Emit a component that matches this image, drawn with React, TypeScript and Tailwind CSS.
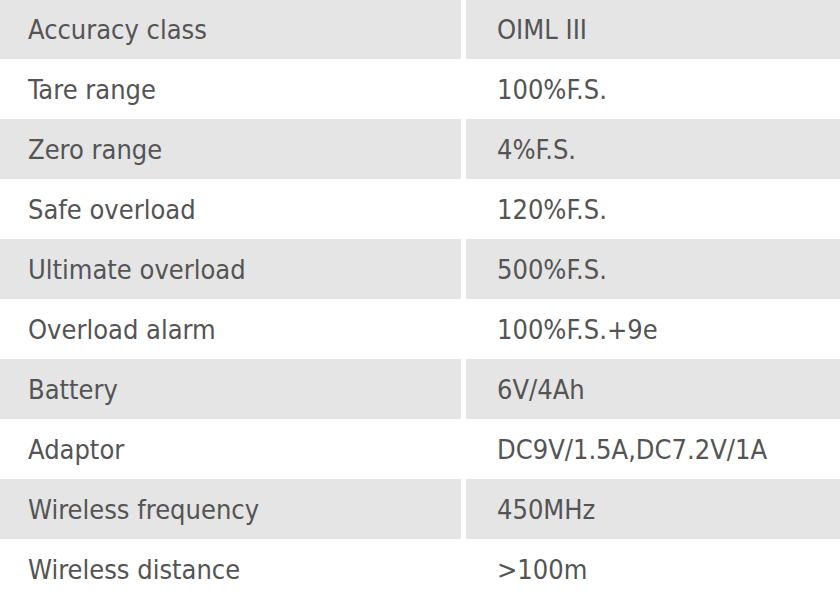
import React from "react";

const rows: [string, string][] = [
  ["Accuracy class", "OIML III"],
  ["Tare range", "100%F.S."],
  ["Zero range", "4%F.S."],
  ["Safe overload", "120%F.S."],
  ["Ultimate overload", "500%F.S."],
  ["Overload alarm", "100%F.S.+9e"],
  ["Battery", "6V/4Ah"],
  ["Adaptor", "DC9V/1.5A,DC7.2V/1A"],
  ["Wireless frequency", "450MHz"],
  ["Wireless distance", ">100m"],
];

export default function App() {
  return (
    <div
      className="w-[840px] h-[593px] overflow-hidden bg-white text-[#545454]"
      style={{ fontFamily: '"DejaVu Sans Condensed", "DejaVu Sans", sans-serif' }}
    >
      <div className="-mt-px flex flex-col">
        {rows.map(([k, v], i) => {
          const bg = i % 2 === 0 ? "bg-[#e5e5e5]" : "bg-white";
          return (
            <div key={k} className="flex h-[60px] gap-x-[5px]">
              <div className={`w-[461px] flex items-center pl-[28px] pt-[3px] text-[27px] ${bg}`}>{k}</div>
              <div className={`flex-1 flex items-center pl-[31px] pt-[3px] text-[27px] ${bg}`}>{v}</div>
            </div>
          );
        })}
      </div>
    </div>
  );
}
